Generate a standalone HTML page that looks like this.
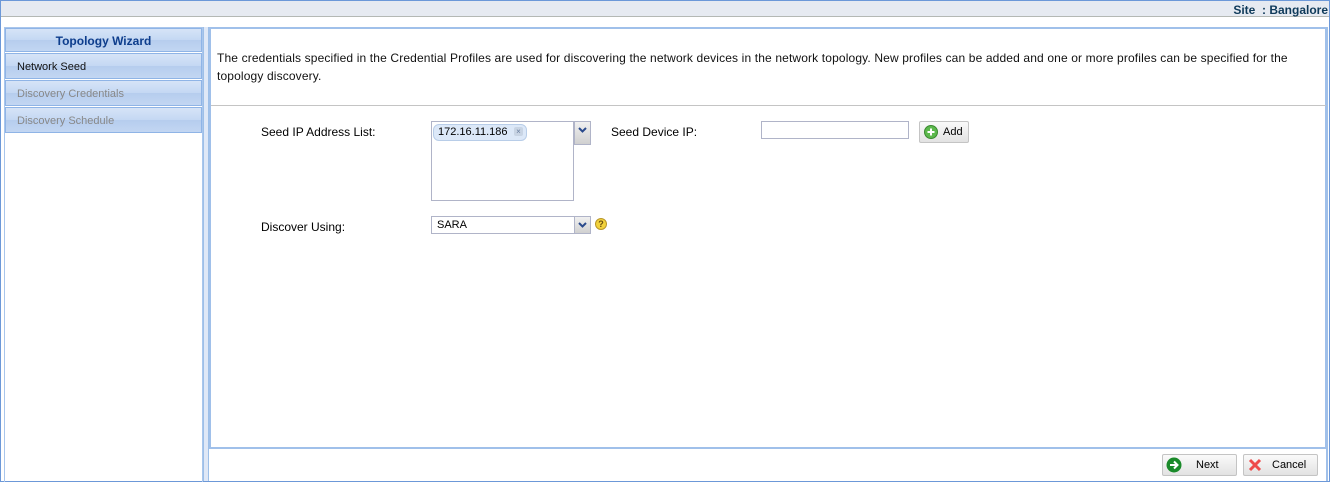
<html><head><style>
body{margin:0;width:1330px;height:482px;position:relative;overflow:hidden;font-family:"Liberation Sans",sans-serif;font-size:12px;background:#fff}
.a{position:absolute}
.nav{position:absolute;left:5px;width:197px;height:24px;border:1px solid #8fb4e6;background:linear-gradient(#d6e4f7 0,#c4d8f3 50%,#b6cdee 51%,#c2d6f2 100%);font-size:11px;line-height:24px;box-sizing:border-box;padding-left:11px;color:#888}
.btn{position:absolute;height:22px;border:1px solid #c4c4c4;border-radius:2px;background:linear-gradient(#fafafa,#e2e2e2);box-sizing:border-box;font-size:11px;line-height:20px}
</style></head><body>
<div class="a" style="left:0;top:0;width:1328px;height:480px;border:1px solid #6c98d8"></div>
<div class="a" style="left:1px;top:1px;width:1328px;height:15px;background:#e6eaf1;border-bottom:1px solid #b4b8b4"></div>
<div class="a" style="right:2px;top:3px;font-weight:bold;font-size:12px;color:#0f3a5a">Site &nbsp;: Bangalore</div>
<div class="a" style="left:4px;top:27px;width:199px;height:455px;border:1px solid #a9c6ec;border-bottom:none;box-sizing:border-box"></div>
<div class="a" style="left:203px;top:27px;width:6px;height:454px;background:#dfe8f7;border-left:1px solid #9dbfe8;border-right:1px solid #9dbfe8;box-sizing:border-box"></div>
<div class="nav" style="top:28px;text-align:center;padding:0;color:#0d3d8c;font-weight:bold;font-size:12px">Topology Wizard</div>
<div class="nav" style="top:53px;color:#111;height:26px;line-height:26px">Network Seed</div>
<div class="nav" style="top:80px;height:26px;line-height:26px">Discovery Credentials</div>
<div class="nav" style="top:107px;height:26px;line-height:26px">Discovery Schedule</div>
<div class="a" style="left:209px;top:27px;width:1119px;height:422px;border:2px solid #a0c0ea;border-right-width:3px;box-sizing:border-box"></div>
<div class="a" style="left:1326px;top:449px;width:2px;height:32px;background:#a0c0ea"></div>
<div class="a" style="left:211px;top:105px;width:1115px;height:1px;background:#c4c4c4"></div>
<div class="a" style="left:217px;top:49px;width:1100px;line-height:18px;color:#111;letter-spacing:0.14px">The credentials specified in the Credential Profiles are used for discovering the network devices in the network topology. New profiles can be added and one or more profiles can be specified for the topology discovery.</div>
<div class="a" style="left:261px;top:125px">Seed IP Address List:</div>
<div class="a" style="left:431px;top:121px;width:143px;height:80px;border:1px solid #b0b4c8;box-sizing:border-box"></div>
<div class="a" style="left:433px;top:124px;width:94px;height:17px;background:#dce8f8;border:1px solid #b8cde8;border-radius:6px;box-sizing:border-box;font-size:11px;line-height:15px;padding-left:4px">172.16.11.186 <span style="position:absolute;left:80px;top:2px;width:9px;height:9px;background:#c8d4e4;border-radius:2px;font-size:8px;line-height:9px;text-align:center;color:#6a7fa0">×</span></div>
<div class="a" style="left:574px;top:121px;width:17px;height:24px;border:1px solid #b0b4c8;box-sizing:border-box;background:linear-gradient(#f0f0f0,#d0d0d0)"><svg width="15" height="12" style="position:absolute;left:0;top:2px"><path d="M4 4l3.5 3.5L11 4" stroke="#2a4a8c" stroke-width="2" fill="none"/></svg></div>
<div class="a" style="left:611px;top:125px">Seed Device IP:</div>
<div class="a" style="left:761px;top:121px;width:148px;height:18px;border:1px solid #b0b4c8;box-sizing:border-box"></div>
<div class="btn" style="left:919px;top:121px;width:50px;padding-left:23px">Add<svg width="14" height="14" style="position:absolute;left:4px;top:3px"><circle cx="7" cy="7" r="6.5" fill="#5cb84c" stroke="#3a8a30"/><path d="M7 3.5v7M3.5 7h7" stroke="#fff" stroke-width="2"/></svg></div>
<div class="a" style="left:261px;top:220px">Discover Using:</div>
<div class="a" style="left:431px;top:216px;width:160px;height:18px;border:1px solid #b0b4c8;box-sizing:border-box;font-size:11px;line-height:16px;padding-left:5px">SARA</div>
<div class="a" style="left:574px;top:216px;width:17px;height:18px;border:1px solid #b0b4c8;box-sizing:border-box;background:linear-gradient(#f0f0f0,#d0d0d0)"><svg width="15" height="12" style="position:absolute;left:0;top:2px"><path d="M4 4l3.5 3.5L11 4" stroke="#2a4a8c" stroke-width="2" fill="none"/></svg></div>
<div class="a" style="left:595px;top:218px;width:12px;height:12px;border-radius:50%;background:#f2d23c;border:1px solid #b8962a;box-sizing:border-box;font-size:9px;font-weight:bold;line-height:10px;text-align:center;color:#6a4e10">?</div>
<div class="btn" style="left:1162px;top:454px;width:75px;padding-left:33px">Next<svg width="16" height="16" style="position:absolute;left:3px;top:2px"><circle cx="8" cy="8" r="7.5" fill="#1a8a2a"/><path d="M4 8h7M8 4.5L11.5 8 8 11.5" stroke="#fff" stroke-width="2" fill="none"/></svg></div>
<div class="btn" style="left:1243px;top:454px;width:75px;padding-left:28px">Cancel<svg width="16" height="16" style="position:absolute;left:3px;top:2px"><path d="M3 3l10 10M13 3L3 13" stroke="#ee4a4a" stroke-width="3"/></svg></div>
</body></html>
